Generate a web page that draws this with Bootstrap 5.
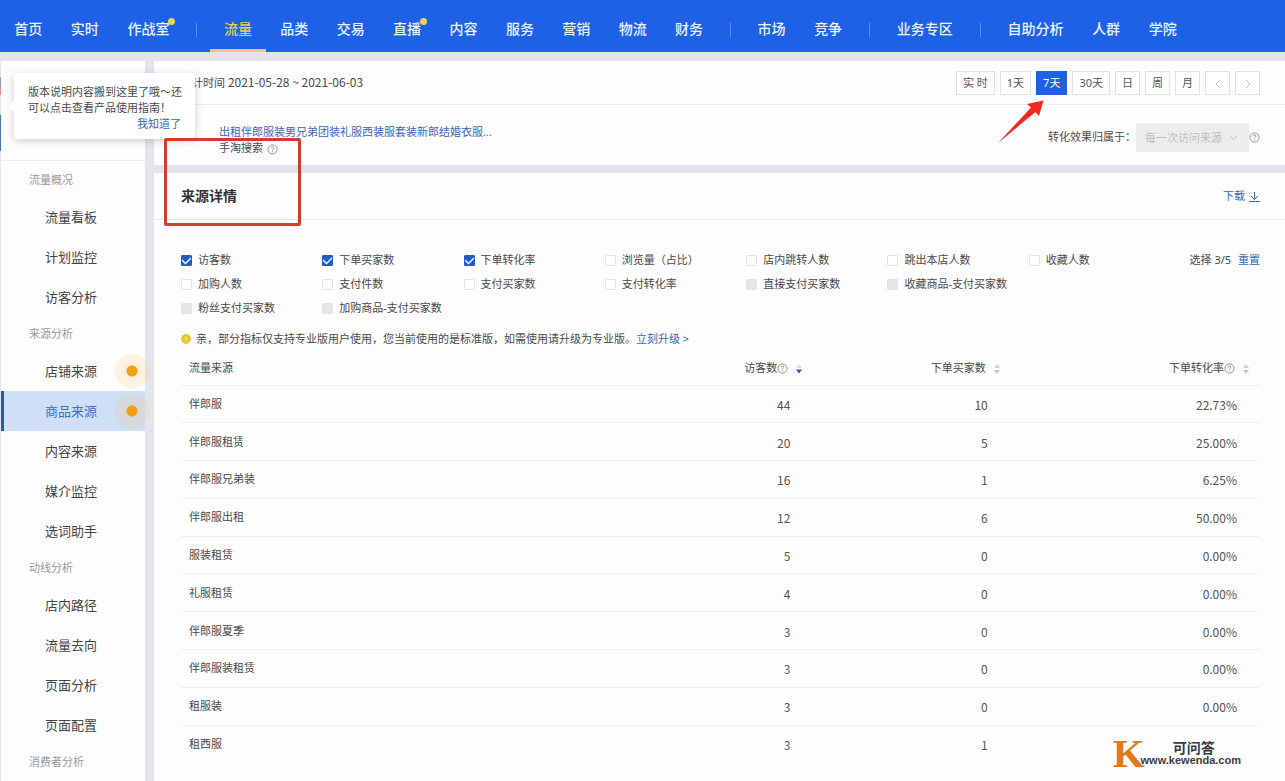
<!DOCTYPE html>
<html lang="zh-CN">
<head>
<meta charset="utf-8">
<meta name="viewport" content="width=device-width, initial-scale=1">
<title>来源详情</title>
<link href="https://cdn.jsdelivr.net/npm/bootstrap@5.3.0/dist/css/bootstrap.min.css" rel="stylesheet">
<style>
  :root { --brand: #1f61e6; --link: #3a68b8; --line: #f0f0f2; --ink: #4a4a4a; }
  body { background: #e4e5ec; color: var(--ink); font-family: "Noto Sans", "Noto Sans CJK SC", sans-serif; font-size: 11px; line-height: 16px; }
  a { color: var(--link); text-decoration: none; }

  .topbar { background: var(--brand); height: 52px; }
  .topbar .nav-link { color: #e9f3ff; font-size: 14px; font-weight: 500; line-height: 20px; padding: 19px 0 10px; border-bottom: 3px solid transparent; white-space: nowrap; }
  .topbar .nav-link.active { color: #e6cf5c; border-bottom-color: #e8d06a; }
  .group-a { width: 14.3%; }
  .group-b { width: 39.5%; }
  .group-c { width: 8.8%; }
  .group-d { width: 6.6%; }
  .group-e { width: 15.4%; }
  .divider { width: 26px; flex: none; }
  .divider::before { content: ""; display: block; width: 1px; height: 14px; margin: 3px auto 0; background: #5f8df0; }
  .news { position: relative; }
  .news::after { content: ""; position: absolute; right: -6px; top: -1px; width: 7px; height: 7px; border-radius: 50%; background: #f0d445; }

  .shell { gap: 9px; padding: 9px 0 0 1px; min-height: calc(100vh - 52px); }
  .side { width: 144px; flex: none; background: #fdfdfe; }
  .side-top { height: 102px; padding-bottom: 2px; }
  .side-top::before { content: ""; display: block; height: 100px; border-bottom: 1px solid #ececee; }
  .side h2 { font-size: 11px; line-height: 34px; margin: 0; padding-left: 28px; color: #999; font-weight: 400; }
  .side .nav-link { height: 40px; line-height: 40px; padding: 0 0 0 44px; font-size: 13px; color: #444; }
  .side .nav-link.active { background: #cfdff6; color: #3f70c8; box-shadow: inset 3px 0 #1c5fb8; }
  .pulse { width: 36px; height: 40px; margin-right: -5px; background: radial-gradient(circle at 18px 20px, #f0a014 5px, rgba(245, 190, 80, .2) 6px, rgba(245, 190, 80, .14) 17px, transparent 18px); }
  .edge { left: -1px; top: 16px; width: 1px; height: 74px; background: linear-gradient(#8b9dc0 0 10px, #f08d8d 10px 18px, #e4e5ec 18px 38px, #4b78a6 38px); }
  .tip { left: 13px; top: 12px; width: 181px; padding: 11px 14px 7px; background: #fff; border-radius: 3px; box-shadow: 0 2px 8px rgba(0, 0, 0, .18); z-index: 5; white-space: nowrap; }
  .tip::before { content: ""; position: absolute; left: -4px; top: 30px; width: 8px; height: 8px; background: #fff; transform: rotate(45deg); }

  .panel { background: #fdfdfe; }
  .panel-lead { min-height: 44px; border-bottom: 1px solid #ececee; }
  .panel-title { min-height: 47px; }
  .inset { padding-left: 27px; padding-right: 25px; }
  .date { font-family: "Noto Sans CJK SC", sans-serif; font-size: 12px; }
  .range { gap: 5px; }
  .range .btn { min-width: 25px; height: 24px; padding: 0 6px; border: 1px solid #e2e2e2; border-radius: 0; background: #fff; color: #555; font-size: 11px; line-height: 22px; }
  .range .btn.active { background: var(--brand); border-color: var(--brand); color: #fff; }
  .pointer { left: -40px; top: 27px; z-index: 4; pointer-events: none; }
  .goods { min-height: 60px; }
  .goods-pic { width: 28px; margin-right: 10px; }
  .goods-text { margin-top: 10px; }
  .pick { width: 113px; height: 29px; padding: 0 0 0 9px; border: 0; border-radius: 0; font-size: 11px; line-height: 29px; background-position: right 11px center; background-size: 9px 9px; background-image: url("data:image/svg+xml,%3Csvg xmlns='http://www.w3.org/2000/svg' viewBox='0 0 10 10'%3E%3Cpath d='M1 3l4 4.500l4-4.500' fill='none' stroke='%23bbb'/%3E%3C/svg%3E"); }
  .pick:disabled { background-color: #ededee; color: #bdbdbd; opacity: 1; }
  .frame { left: 10px; top: -35px; width: 137px; height: 88px; border: 3px solid #d93a2e; border-radius: 2px; z-index: 6; pointer-events: none; }
  .panel h1 { font-size: 14px; line-height: 20px; font-weight: 600; color: #333; margin: 0; }

  .metrics { display: grid; grid-template-columns: repeat(7, minmax(0, 1fr)); grid-auto-rows: 24px; }
  .metrics .form-check { display: flex; align-items: center; gap: 6px; padding: 0; margin: 0; min-height: 0; white-space: nowrap; }
  .metrics .form-check-input { float: none; margin: 0; width: 11px; height: 11px; flex: none; border: 1px solid #e2e4e9; border-radius: 1px; }
  .metrics .form-check-input:checked { background-color: #2459cc; border-color: #2459cc; background-size: 11px 11px; background-image: url("data:image/svg+xml,%3Csvg xmlns='http://www.w3.org/2000/svg' viewBox='0 0 11 11'%3E%3Cpath d='M1 5l3.500 3.500L10 3' fill='none' stroke='%23fff' stroke-width='1.300'/%3E%3C/svg%3E"); }
  .metrics .form-check-input:disabled { background-color: #e6e6e6; opacity: 1; }
  .metrics .form-check-input:disabled ~ .form-check-label { opacity: 1; }
  .chosen { width: 90px; line-height: 24px; white-space: nowrap; }
  .notice { gap: 5px; margin: 11px 0 4px; }

  .sources { height: 411px; margin: 0; table-layout: fixed; color: var(--ink); --bs-table-bg: transparent; --bs-table-color: var(--ink); }
  .sources > :not(caption) > * > * { padding: 0 10px 0 8px; border-bottom: 1px solid var(--line); font-weight: 400; vertical-align: middle; }
  .sources thead th { height: 34px; }
  .sources tbody td { text-align: right; padding-right: 23px; padding-top: 2px; font-size: 12px; color: #555; font-family: "Noto Sans CJK SC", sans-serif; }
  .sources .w-a { width: 18.3%; }
  .sources .w-b { width: 23.1%; }
  .sort { margin-left: 7px; }

  .brandmark { right: 44px; bottom: 10px; z-index: 3; color: #3b3b3d; font-family: "Liberation Sans", "Noto Sans CJK SC", sans-serif; font-weight: 700; }
  .brandmark-k { font: 700 41px/36px "Liberation Serif", serif; color: #e2791f; margin-right: -4px; }
  .brandmark-name { font-size: 14px; line-height: 14px; padding-left: 6px; }
  .brandmark-url { font-size: 11px; line-height: 11px; }
</style>
</head>
<body>
<svg width="0" height="0" class="position-absolute" aria-hidden="true">
  <symbol id="help" viewBox="0 0 12 12"><circle cx="6" cy="6" r="5" fill="none" stroke="#8c8c8c"/><path d="M4.500 4.800q0-1.500 1.500-1.500t1.500 1.300q0 .8-.8 1.200t-.7 1.200M6 8v1" fill="none" stroke="#8c8c8c"/></symbol>
  <symbol id="sort" viewBox="0 0 8 12"><path d="M1 5l3-4 3 4z" fill="#d2d2d4"/><path d="M1 7l3 4 3-4z" fill="#c6c6ca"/></symbol>
  <symbol id="sort-down" viewBox="0 0 8 12"><path d="M1 5l3-4 3 4z" fill="#d9dde6"/><path d="M1 6.500l3 4 3-4z" fill="#2459c0"/></symbol>
</svg>

<header class="topbar d-flex">
  <ul class="nav nav-fill group-a flex-nowrap">
    <li class="nav-item"><a class="nav-link" href="#">首页</a></li>
    <li class="nav-item"><a class="nav-link" href="#">实时</a></li>
    <li class="nav-item"><a class="nav-link" href="#"><span class="news">作战室</span></a></li>
  </ul>
  <span class="divider pt-3 mt-1"></span>
  <ul class="nav nav-fill group-b flex-nowrap">
    <li class="nav-item"><a class="nav-link active" href="#">流量</a></li>
    <li class="nav-item"><a class="nav-link" href="#">品类</a></li>
    <li class="nav-item"><a class="nav-link" href="#">交易</a></li>
    <li class="nav-item"><a class="nav-link" href="#"><span class="news">直播</span></a></li>
    <li class="nav-item"><a class="nav-link" href="#">内容</a></li>
    <li class="nav-item"><a class="nav-link" href="#">服务</a></li>
    <li class="nav-item"><a class="nav-link" href="#">营销</a></li>
    <li class="nav-item"><a class="nav-link" href="#">物流</a></li>
    <li class="nav-item"><a class="nav-link" href="#">财务</a></li>
  </ul>
  <span class="divider pt-3 mt-1"></span>
  <ul class="nav nav-fill group-c flex-nowrap">
    <li class="nav-item"><a class="nav-link" href="#">市场</a></li>
    <li class="nav-item"><a class="nav-link" href="#">竞争</a></li>
  </ul>
  <span class="divider pt-3 mt-1"></span>
  <ul class="nav nav-fill group-d flex-nowrap">
    <li class="nav-item"><a class="nav-link" href="#">业务专区</a></li>
  </ul>
  <span class="divider pt-3 mt-1"></span>
  <ul class="nav nav-fill group-e flex-nowrap">
    <li class="nav-item"><a class="nav-link" href="#">自助分析</a></li>
    <li class="nav-item"><a class="nav-link" href="#">人群</a></li>
    <li class="nav-item"><a class="nav-link" href="#">学院</a></li>
  </ul>
</header>

<div class="shell d-flex">
  <aside class="side position-relative">
    <span class="edge position-absolute"></span>
    <div class="tip position-absolute">
      <div>版本说明内容搬到这里了哦～还</div>
      <div>可以点击查看产品使用指南！</div>
      <div class="text-end"><a href="#">我知道了</a></div>
    </div>
    <div class="side-top"></div>
    <nav class="nav flex-column">
      <h2>流量概况</h2>
      <a class="nav-link" href="#">流量看板</a>
      <a class="nav-link" href="#">计划监控</a>
      <a class="nav-link" href="#">访客分析</a>
      <h2>来源分析</h2>
      <a class="nav-link d-flex justify-content-between" href="#">店铺来源<span class="pulse"></span></a>
      <a class="nav-link active d-flex justify-content-between" href="#">商品来源<span class="pulse"></span></a>
      <a class="nav-link" href="#">内容来源</a>
      <a class="nav-link" href="#">媒介监控</a>
      <a class="nav-link" href="#">选词助手</a>
      <h2>动线分析</h2>
      <a class="nav-link" href="#">店内路径</a>
      <a class="nav-link" href="#">流量去向</a>
      <a class="nav-link" href="#">页面分析</a>
      <a class="nav-link" href="#">页面配置</a>
      <h2>消费者分析</h2>
    </nav>
  </aside>

  <main class="flex-grow-1 d-flex flex-column gap-2">
    <section class="panel">
      <div class="panel-lead inset d-flex align-items-center justify-content-between">
        <div>统计时间 <span class="date">2021-05-28 ~ 2021-06-03</span></div>
        <div class="range d-flex">
          <button type="button" class="btn">实 时</button>
          <button type="button" class="btn">1天</button>
          <button type="button" class="btn active position-relative">7天
            <svg class="pointer position-absolute" width="50" height="46" viewBox="0 0 50 46" aria-hidden="true"><path d="M1 44L34 8.500 30 5 46.500 1.500 42 17 38.500 13z" fill="#f0281e"/></svg>
          </button>
          <button type="button" class="btn">30天</button>
          <button type="button" class="btn">日</button>
          <button type="button" class="btn">周</button>
          <button type="button" class="btn">月</button>
          <button type="button" class="btn" aria-label="上一页"><svg width="8" height="10" viewBox="0 0 8 10"><path d="M6 1L2 5l4 4" fill="none" stroke="#bbb"/></svg></button>
          <button type="button" class="btn" aria-label="下一页"><svg width="8" height="10" viewBox="0 0 8 10"><path d="M2 1l4 4-4 4" fill="none" stroke="#bbb"/></svg></button>
        </div>
      </div>
      <div class="goods inset d-flex align-items-center justify-content-between">
        <div class="d-flex">
          <svg class="goods-pic" height="34" viewBox="0 0 28 34" aria-hidden="true"><path d="M1 22l5-1v4H0zM8 22l5-1 1 4H8z" fill="#333"/></svg>
          <div class="goods-text">
            <div><a href="#">出租伴郎服装男兄弟团装礼服西装服套装新郎结婚衣服...</a></div>
            <div>手淘搜索<svg width="11" height="11" class="ms-1"><use href="#help"/></svg></div>
          </div>
        </div>
        <div class="d-flex align-items-center pt-1">
          <label for="credit">转化效果归属于：</label>
          <select id="credit" class="form-select pick" disabled><option>每一次访问来源</option></select>
          <svg width="11" height="11"><use href="#help"/></svg>
        </div>
      </div>
    </section>

    <section class="panel position-relative flex-grow-1">
      <span class="frame position-absolute"></span>
      <div class="panel-lead panel-title inset d-flex align-items-center justify-content-between">
        <h1>来源详情</h1>
        <a href="#">下载<svg width="11" height="12" viewBox="0 0 11 12" class="ms-1"><path d="M5.500 1v7M2 5l3.500 3.500L9 5M0 10.500h11" fill="none" stroke="#3a68b8"/></svg></a>
      </div>
      <div class="inset pt-4">
        <div class="d-flex pt-1">
          <div class="metrics flex-grow-1">
            <div class="form-check"><input class="form-check-input" type="checkbox" id="m1" checked><label class="form-check-label" for="m1">访客数</label></div>
            <div class="form-check"><input class="form-check-input" type="checkbox" id="m2" checked><label class="form-check-label" for="m2">下单买家数</label></div>
            <div class="form-check"><input class="form-check-input" type="checkbox" id="m3" checked><label class="form-check-label" for="m3">下单转化率</label></div>
            <div class="form-check"><input class="form-check-input" type="checkbox" id="m4"><label class="form-check-label" for="m4">浏览量（占比）</label></div>
            <div class="form-check"><input class="form-check-input" type="checkbox" id="m5"><label class="form-check-label" for="m5">店内跳转人数</label></div>
            <div class="form-check"><input class="form-check-input" type="checkbox" id="m6"><label class="form-check-label" for="m6">跳出本店人数</label></div>
            <div class="form-check"><input class="form-check-input" type="checkbox" id="m7"><label class="form-check-label" for="m7">收藏人数</label></div>
            <div class="form-check"><input class="form-check-input" type="checkbox" id="m8"><label class="form-check-label" for="m8">加购人数</label></div>
            <div class="form-check"><input class="form-check-input" type="checkbox" id="m9"><label class="form-check-label" for="m9">支付件数</label></div>
            <div class="form-check"><input class="form-check-input" type="checkbox" id="m10"><label class="form-check-label" for="m10">支付买家数</label></div>
            <div class="form-check"><input class="form-check-input" type="checkbox" id="m11"><label class="form-check-label" for="m11">支付转化率</label></div>
            <div class="form-check"><input class="form-check-input" type="checkbox" id="m12" disabled><label class="form-check-label" for="m12">直接支付买家数</label></div>
            <div class="form-check"><input class="form-check-input" type="checkbox" id="m13" disabled><label class="form-check-label" for="m13">收藏商品-支付买家数</label></div>
            <div></div>
            <div class="form-check"><input class="form-check-input" type="checkbox" id="m14" disabled><label class="form-check-label" for="m14">粉丝支付买家数</label></div>
            <div class="form-check"><input class="form-check-input" type="checkbox" id="m15" disabled><label class="form-check-label" for="m15">加购商品-支付买家数</label></div>
          </div>
          <div class="chosen text-end">选择 3/5 <a href="#" class="ms-1">重置</a></div>
        </div>
        <div class="notice d-flex align-items-center">
          <svg width="10" height="10" viewBox="0 0 10 10" aria-hidden="true"><circle cx="5" cy="5" r="5" fill="#e8c92c"/><path d="M5 2.500v3.500M5 7v1" stroke="#fff6c8"/></svg>
          <div>亲，部分指标仅支持专业版用户使用，您当前使用的是标准版，如需使用请升级为专业版。<a href="#">立刻升级 &gt;</a></div>
        </div>
        <table class="table sources">
          <thead>
            <tr>
              <th scope="col">流量来源</th>
              <th scope="col" class="w-a text-end">访客数<svg width="11" height="11"><use href="#help"/></svg><svg class="sort" width="8" height="12"><use href="#sort-down"/></svg></th>
              <th scope="col" class="w-a text-end">下单买家数<svg class="sort" width="8" height="12"><use href="#sort"/></svg></th>
              <th scope="col" class="w-b text-end">下单转化率<svg width="11" height="11"><use href="#help"/></svg><svg class="sort" width="8" height="12"><use href="#sort"/></svg></th>
            </tr>
          </thead>
          <tbody>
            <tr><th scope="row">伴郎服</th><td>44</td><td>10</td><td>22.73%</td></tr>
            <tr><th scope="row">伴郎服租赁</th><td>20</td><td>5</td><td>25.00%</td></tr>
            <tr><th scope="row">伴郎服兄弟装</th><td>16</td><td>1</td><td>6.25%</td></tr>
            <tr><th scope="row">伴郎服出租</th><td>12</td><td>6</td><td>50.00%</td></tr>
            <tr><th scope="row">服装租赁</th><td>5</td><td>0</td><td>0.00%</td></tr>
            <tr><th scope="row">礼服租赁</th><td>4</td><td>0</td><td>0.00%</td></tr>
            <tr><th scope="row">伴郎服夏季</th><td>3</td><td>0</td><td>0.00%</td></tr>
            <tr><th scope="row">伴郎服装租赁</th><td>3</td><td>0</td><td>0.00%</td></tr>
            <tr><th scope="row">租服装</th><td>3</td><td>0</td><td>0.00%</td></tr>
            <tr><th scope="row" class="border-0">租西服</th><td class="border-0">3</td><td class="border-0">1</td><td class="border-0"></td></tr>
          </tbody>
        </table>
      </div>
      <div class="brandmark position-absolute d-flex align-items-center">
        <span class="brandmark-k">K</span>
        <div class="text-center">
          <div class="brandmark-name">可问答</div>
          <div class="brandmark-url">www.kewenda.com</div>
        </div>
      </div>
    </section>
  </main>
</div>
<script src="https://cdn.jsdelivr.net/npm/bootstrap@5.3.0/dist/js/bootstrap.bundle.min.js"></script>
</body>
</html>
